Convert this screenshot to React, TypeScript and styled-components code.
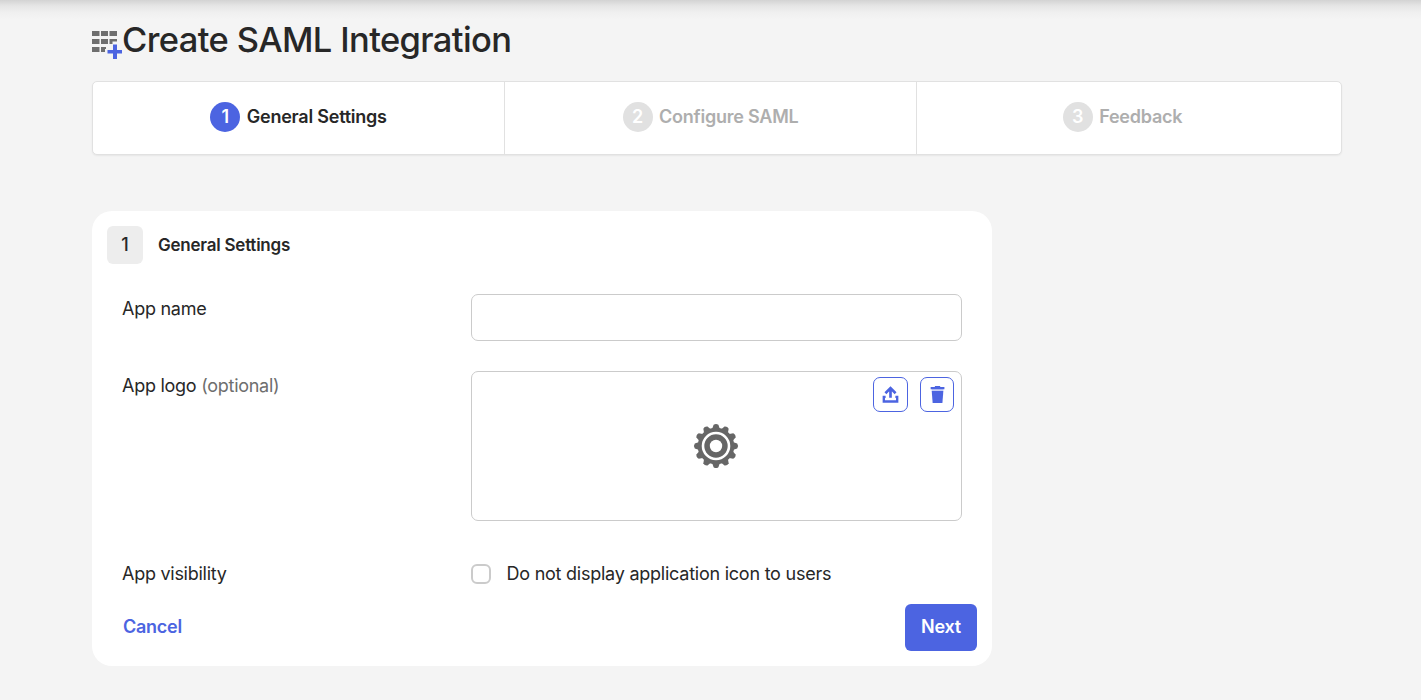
import React from "react";
import styled, { createGlobalStyle } from "styled-components";

const GlobalStyle = createGlobalStyle`
  *, *::before, *::after { box-sizing: border-box; }
  html, body { margin: 0; height: 100%; }
  body {
    background: #f4f4f4;
    color: #272727;
    font-family: Inter, "Liberation Sans", sans-serif;
    font-size: 18px;
    line-height: 24px;
    overflow: hidden;
  }
`;

const Page = styled.div`
  height: 700px;
  padding: 18px 79px 0 92px;
  background: linear-gradient(#d3d3d3 0, #e6e6e6 6px, #f0f0f0 13px, #f4f4f4 20px);
`;

const TitleBar = styled.header`
  display: flex;
  align-items: flex-start;
  height: 63px;
`;

const TitleIcon = styled.svg`
  flex: none;
  width: 30px;
  height: 30px;
  margin-top: 12px;
`;

const Title = styled.h1`
  margin: 0;
  font-size: 34.500px;
  line-height: 43px;
  font-weight: 500;
  letter-spacing: -0.63px;
  white-space: nowrap;
`;

const Steps = styled.ol`
  display: grid;
  grid-template-columns: 411px 412px 1fr;
  height: 74px;
  margin: 0;
  padding: 0;
  list-style: none;
  background: #fff;
  border: 1px solid #e1e1e1;
  border-radius: 5px;
  box-shadow: 0 1px 2px rgba(0, 0, 0, 0.06);
`;

const Step = styled.li<{ $active?: boolean }>`
  display: flex;
  justify-content: center;
  gap: 6.500px;
  padding-top: 20px;
  font-weight: 600;
  line-height: 30px;
  letter-spacing: -0.23px;
  color: ${(p) => (p.$active ? "#272727" : "#aeaeae")};
  & + & { border-left: 1px solid #e1e1e1; }
  &:last-child { padding-right: 13px; }
`;

const StepNumber = styled.span<{ $active?: boolean }>`
  width: 30px;
  height: 30px;
  border-radius: 50%;
  text-align: center;
  color: #fff;
  background: ${(p) => (p.$active ? "#4c64e1" : "#e1e1e1")};
`;

const Card = styled.form`
  width: 900px;
  height: 455px;
  margin-top: 56px;
  padding: 15px;
  background: #fff;
  border-radius: 20px;
`;

const CardHeader = styled.div`
  display: flex;
  gap: 15px;
  height: 38px;
`;

const SectionNumber = styled.span`
  width: 36px;
  border-radius: 6px;
  background: #ededed;
  font-weight: 500;
  line-height: 37px;
  text-align: center;
`;

const SectionTitle = styled.h2`
  margin: 0;
  font-size: 17px;
  line-height: 38px;
  font-weight: 600;
  letter-spacing: -0.23px;
`;

const Field = styled.div<{ $top: number; $height: number }>`
  display: grid;
  grid-template-columns: 349px 491px;
  height: ${(p) => p.$height}px;
  margin: ${(p) => p.$top}px 15px 0;
`;

const Label = styled.label`
  padding-top: 3px;
  letter-spacing: -0.27px;
`;

const Hint = styled.span`
  color: #6e6e6e;
`;

const TextInput = styled.input`
  width: 100%;
  height: 47px;
  padding: 0 12px;
  border: 1px solid #cbcbcb;
  border-radius: 7px;
  background: #fff;
  font: inherit;
  outline: none;
`;

const LogoBox = styled.div`
  position: relative;
  display: flex;
  justify-content: center;
  align-items: center;
  height: 150px;
  padding: 0 1px 1px 0;
  border: 1px solid #cbcbcb;
  border-radius: 7px;
`;

const LogoActions = styled.div`
  position: absolute;
  top: 5px;
  right: 7px;
  display: flex;
  gap: 12px;
`;

const IconButton = styled.button<{ $width: number }>`
  display: flex;
  align-items: center;
  justify-content: center;
  width: ${(p) => p.$width}px;
  height: 35px;
  padding: 0;
  border: 1px solid #4c64e1;
  border-radius: 7px;
  background: #fff;
  color: #4c64e1;
`;

const CheckboxLabel = styled.label`
  display: flex;
  gap: 15.500px;
  padding-top: 3px;
  letter-spacing: -0.24px;
`;

const Checkbox = styled.input`
  appearance: none;
  width: 20px;
  height: 20px;
  margin: 2px 0 0;
  border: 2px solid #cbcbcb;
  border-radius: 6px;
  background: #fff;
`;

const Actions = styled.div`
  display: flex;
  justify-content: space-between;
  align-items: flex-start;
  margin-top: 9px;
`;

const CancelButton = styled.button`
  height: 45px;
  padding: 0 16px;
  border: 0;
  background: none;
  color: #4c64e1;
  font: inherit;
  font-weight: 600;
  letter-spacing: -0.25px;
`;

const NextButton = styled.button`
  width: 72px;
  height: 47px;
  padding: 0 0 2px;
  border: 0;
  border-radius: 6px;
  background: #4c64e1;
  color: #fff;
  font: inherit;
  font-weight: 600;
  letter-spacing: -0.25px;
`;

const AppGridIcon = () => (
  <TitleIcon viewBox="0 0 30 30" aria-hidden="true">
    <path
      fill="#6e6e6e"
      d="M0 1h7.500v5H0zM9 1h7v5H9zM17.500 1H25v5h-7.500zM0 9h7.500v5H0zM9 9h7v5H9zM17.500 9H25v2.500h-4.500V14h-3zM0 17h7.500v5H0zM9 17h5v2h-1v3H9z"
    />
    <path fill="#4c64e1" d="M21 14.500h4v5.500h5.500v3.500H25V29h-4v-5.500h-5.500V20H21z" />
  </TitleIcon>
);

const UploadIcon = () => (
  <svg width="17" height="17" viewBox="0 0 16 16" fill="none" stroke="currentColor" strokeWidth="2.500">
    <path d="M8 11V2M3.200 6.800 8 2l4.800 4.800" />
    <path d="M3.400 10.300H1.700v4.300h12.600v-4.300h-1.700" strokeWidth="2.200" />
  </svg>
);

const TrashIcon = () => (
  <svg width="18" height="17" viewBox="-1 0 17 16" fill="currentColor">
    <path d="M5.500 0h5v1h4v2h-13V1h4z" />
    <path fillOpacity="0.35" d="M2.500 3h11v1.600h-11z" />
    <path d="M2.500 4.600h11L12.600 16H3.400z" />
  </svg>
);

const teeth = Array.from({ length: 12 }, (_, i) => i * 30);

const GearIcon = () => (
  <svg width="46" height="46" viewBox="-23 -23 46 46" fill="#666">
    <circle r="18.300" />
    {teeth.map((angle) => (
      <path key={angle} d="M-3.700-17.500-2.400-21.200Q0-23 2.400-21.200L3.700-17.500z" transform={`rotate(${angle})`} />
    ))}
    <circle r="13" fill="none" stroke="#fff" strokeWidth="2.600" />
    <circle r="6.200" fill="#fff" />
  </svg>
);

export default function App() {
  return (
    <>
      <GlobalStyle />
      <Page>
        <TitleBar>
          <AppGridIcon />
          <Title>Create SAML Integration</Title>
        </TitleBar>
        <Steps>
          <Step $active><StepNumber $active>1</StepNumber>General Settings</Step>
          <Step><StepNumber>2</StepNumber>Configure SAML</Step>
          <Step><StepNumber>3</StepNumber>Feedback</Step>
        </Steps>
        <Card>
          <CardHeader>
            <SectionNumber>1</SectionNumber>
            <SectionTitle>General Settings</SectionTitle>
          </CardHeader>
          <Field $top={30} $height={47}>
            <Label htmlFor="app-name">App name</Label>
            <TextInput id="app-name" />
          </Field>
          <Field $top={30} $height={150}>
            <Label as="span">App logo <Hint>(optional)</Hint></Label>
            <LogoBox>
              <GearIcon />
              <LogoActions>
                <IconButton $width={35} type="button" aria-label="Upload logo"><UploadIcon /></IconButton>
                <IconButton $width={34} type="button" aria-label="Delete logo"><TrashIcon /></IconButton>
              </LogoActions>
            </LogoBox>
          </Field>
          <Field $top={38} $height={36}>
            <Label as="span">App visibility</Label>
            <CheckboxLabel>
              <Checkbox type="checkbox" />
              Do not display application icon to users
            </CheckboxLabel>
          </Field>
          <Actions>
            <CancelButton type="button">Cancel</CancelButton>
            <NextButton type="button">Next</NextButton>
          </Actions>
        </Card>
      </Page>
    </>
  );
}
